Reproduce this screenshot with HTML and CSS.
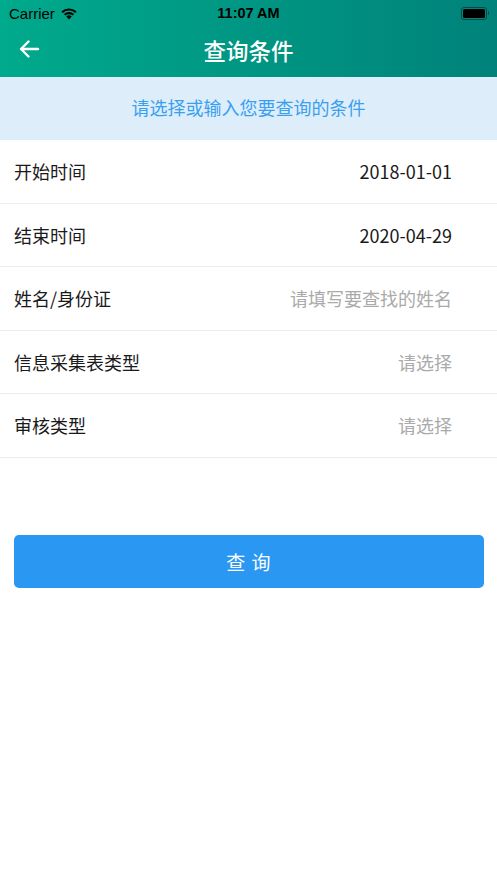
FILE: index.html
```html
<!DOCTYPE html>
<html lang="zh-CN">
<head>
    <meta charset="UTF-8">
    <meta name="viewport" content="width=device-width, initial-scale=1.0">
    <title>查询条件</title>
    <link rel="stylesheet" href="styles.css">
</head>
<body>
    <div class="header">
        <div class="status-bar">
            <div class="carrier">Carrier
                <svg class="wifi" width="18" height="13" viewBox="0 0 18 13">
                    <path d="M9 12.5 L6.3 9.6 A3.9 3.9 0 0 1 11.7 9.6 Z" fill="#000"/>
                    <path d="M3.9 7.1 A7.3 7.3 0 0 1 14.1 7.1 L12.6 8.6 A5.2 5.2 0 0 0 5.4 8.6 Z" fill="#000"/>
                    <path d="M1.4 4.5 A10.9 10.9 0 0 1 16.6 4.5 L15.1 6.1 A8.7 8.7 0 0 0 2.9 6.1 Z" fill="#000"/>
                </svg>
            </div>
            <div class="clock">11:07 AM</div>
            <div class="battery">
                <span class="battery-body"><span class="battery-level"></span></span>
                <span class="battery-tip"></span>
            </div>
        </div>
        <div class="nav-bar">
            <svg class="back" width="22" height="20" viewBox="0 0 22 20">
                <path d="M20 10 H3 M10.5 2.5 L3 10 L10.5 17.5" fill="none" stroke="#fff" stroke-width="2.4" stroke-linecap="round" stroke-linejoin="round"/>
            </svg>
            <h1>查询条件</h1>
        </div>
    </div>

    <div class="tip">请选择或输入您要查询的条件</div>

    <div class="form">
        <div class="row">
            <span class="label">开始时间</span>
            <span class="value">2018-01-01</span>
        </div>
        <div class="row">
            <span class="label">结束时间</span>
            <span class="value">2020-04-29</span>
        </div>
        <div class="row">
            <span class="label">姓名/身份证</span>
            <span class="value placeholder">请填写要查找的姓名</span>
        </div>
        <div class="row">
            <span class="label">信息采集表类型</span>
            <span class="value placeholder">请选择</span>
        </div>
        <div class="row">
            <span class="label">审核类型</span>
            <span class="value placeholder">请选择</span>
        </div>
    </div>

    <div class="actions">
        <button class="search-btn">查 询</button>
    </div>
</body>
</html>
```

FILE: styles.css
```css
body {
    margin: 0;
    font-family: "Noto Sans CJK SC", "Noto Sans", sans-serif;
    background-color: #fff;
    color: #1a1a1a;
}
.header {
    background: linear-gradient(to right, #00aa8c, #00827a);
    color: #fff;
    height: 77px;
}
.status-bar {
    height: 26px;
    display: flex;
    align-items: center;
    justify-content: space-between;
    padding: 0 8px 0 9px;
    color: #000;
    font-family: "Liberation Sans", Arial, sans-serif;
    font-size: 15px;
    position: relative;
}
.carrier {
    display: flex;
    align-items: center;
    gap: 5px;
}
.clock {
    position: absolute;
    left: 0;
    right: 0;
    text-align: center;
    font-weight: bold;
    font-size: 14.5px;
}
.battery {
    display: flex;
    align-items: center;
    gap: 1px;
}
.battery-body {
    width: 22px;
    height: 9px;
    border: 1.5px solid #0b4a44;
    border-radius: 3px;
    padding: 1px;
    display: block;
}
.battery-level {
    display: block;
    width: 100%;
    height: 100%;
    background: #000;
    border-radius: 1.5px;
}
.battery-tip {
    width: 1.5px;
    height: 4px;
    background: #0b4a44;
    border-radius: 0 1px 1px 0;
}
.nav-bar {
    height: 51px;
    display: flex;
    align-items: center;
    justify-content: center;
    position: relative;
}
.back {
    position: absolute;
    left: 18px;
    top: 13px;
}
.nav-bar h1 {
    margin: 0 0 4px;
    font-size: 22.5px;
    font-weight: 500;
}
.tip {
    height: 63px;
    padding-bottom: 3px;
    box-sizing: border-box;
    background-color: #ddeefa;
    color: #3a9ff0;
    font-size: 18px;
    display: flex;
    align-items: center;
    justify-content: center;
}
.row {
    height: 63.5px;
    box-sizing: border-box;
    display: flex;
    align-items: center;
    justify-content: space-between;
    padding: 0 45px 0 14px;
    border-bottom: 1px solid #ededed;
    font-size: 18px;
}
.value {
    color: #1a1a1a;
}
.value.placeholder {
    color: #aaaaaa;
}
.actions {
    padding: 77px 13px 0 14px;
}
.search-btn {
    width: 100%;
    height: 53px;
    border: none;
    border-radius: 5px;
    background-color: #2a98f2;
    color: #fff;
    font-family: inherit;
    font-size: 19px;
    letter-spacing: 1px;
    cursor: pointer;
}
```
